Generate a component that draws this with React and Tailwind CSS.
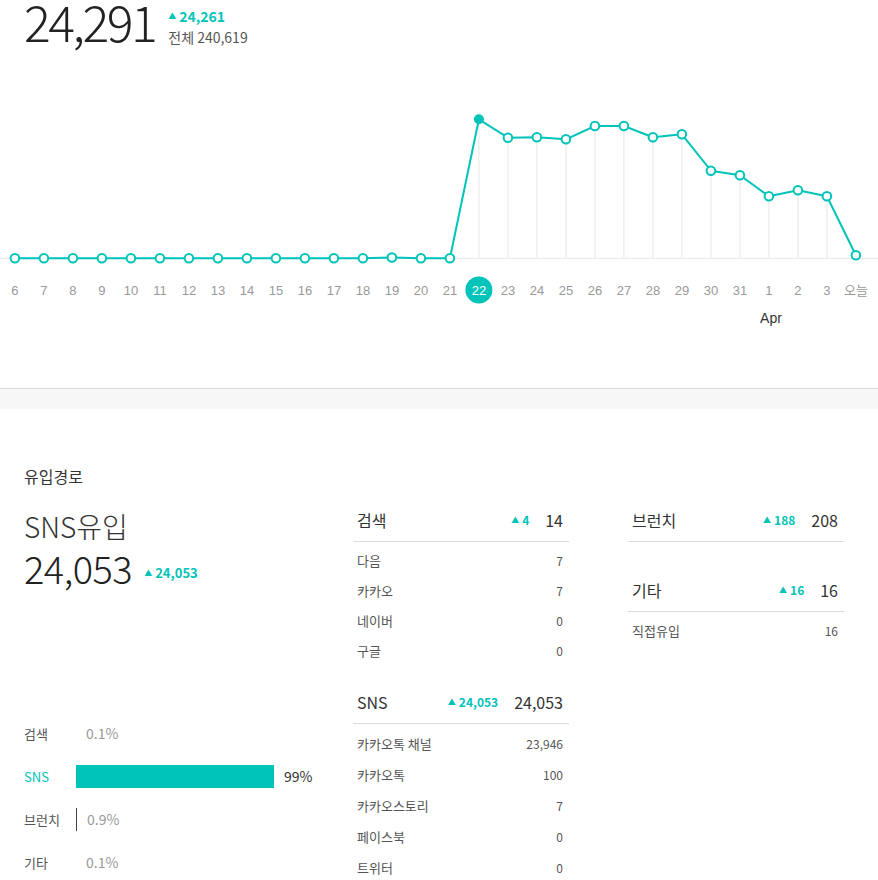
import React from "react";

const TEAL = "#00c3b9";
const CJK = "font-['Noto_Sans_CJK_KR','Noto_Sans',sans-serif]";

// daily visitor series: [label, y (chart px)]
const SERIES = [
  ["6", 258.3], ["7", 258.3], ["8", 258.3], ["9", 258.3], ["10", 258.3],
  ["11", 258.3], ["12", 258.3], ["13", 258.3], ["14", 258.3], ["15", 258.3],
  ["16", 258.3], ["17", 258.3], ["18", 258.3], ["19", 257.5], ["20", 258.3],
  ["21", 258.3], ["22", 119.3], ["23", 137.7], ["24", 137.3], ["25", 139.3],
  ["26", 126], ["27", 126], ["28", 137.3], ["29", 134.3], ["30", 170.7],
  ["31", 175.3], ["1", 196.3], ["2", 190.3], ["3", 196.3], ["오늘", 255.3],
];

const OFFSET = 60;
const BASE = 258.3 - OFFSET;
const xAt = (i) => 14.9 + 29 * i;
const SELECTED = 16;

function Chart() {
  const pts = SERIES.map(([, y], i) => [xAt(i), y - OFFSET]);
  const d = pts.map(([x, y], i) => `${i ? "L" : "M"}${x} ${y}`).join(" ");
  return (
    <svg width="878" height="328" viewBox="0 0 878 328" className="block">
      <line x1="0" y1={BASE} x2="878" y2={BASE} stroke="#e6e6e6" strokeWidth="1" />
      {pts.map(([x, y], i) =>
        y < BASE - 1 ? (
          <line key={"g" + i} x1={x} y1={y} x2={x} y2={BASE} stroke="#efefef" strokeWidth="1.5" />
        ) : null
      )}
      <path d={d} fill="none" stroke={TEAL} strokeWidth="2" strokeLinejoin="round" />
      {pts.map(([x, y], i) =>
        i === SELECTED ? (
          <circle key={"p" + i} cx={x} cy={y} r="5" fill={TEAL} />
        ) : (
          <circle key={"p" + i} cx={x} cy={y} r="4.3" fill="#fff" stroke={TEAL} strokeWidth="2" />
        )
      )}
      <circle cx={xAt(SELECTED)} cy={290 - OFFSET} r="13.5" fill={TEAL} />
      {SERIES.map(([label], i) => (
        <text
          key={"t" + i}
          x={xAt(i)}
          y={290 - OFFSET + 4.5}
          textAnchor="middle"
          fontSize="13"
          fill={i === SELECTED ? "#fff" : "#999"}
          fontFamily="'Liberation Sans','Noto Sans CJK KR',sans-serif"
        >
          {label}
        </text>
      ))}
      <text
        x="771"
        y={318 - OFFSET + 5}
        textAnchor="middle"
        fontSize="14"
        fill="#333"
        fontFamily="'Liberation Sans',sans-serif"
      >
        Apr
      </text>
    </svg>
  );
}

function Up({ value, className = "" }) {
  return (
    <span className={`flex items-center font-bold ${className}`} style={{ color: TEAL }}>
      <span className="mr-[3px] text-[8px] leading-none">▲</span>
      {value}
    </span>
  );
}

function Group({ title, up, total, rows, rowH = "h-[30px]", className = "" }) {
  return (
    <div className={className}>
      <div className="flex h-[43px] items-center border-b border-[#dcdcdc] pl-[4px] pr-[6px]">
        <span className="text-[16px] text-[#333]">{title}</span>
        <span className="ml-auto text-[12px]">
          <Up value={up} />
        </span>
        <span className="ml-[16px] text-[16px] text-[#333]">{total}</span>
      </div>
      {rows && (
        <div className="pt-[4px]">
          {rows.map(([k, v]) => (
            <div key={k} className={`flex ${rowH} items-center pl-[4px] pr-[6px] text-[13px] text-[#555]`}>
              <span>{k}</span>
              <span className="ml-auto text-[12px]">{v}</span>
            </div>
          ))}
        </div>
      )}
    </div>
  );
}

function ShareRow({ label, pct, width, active, mark }) {
  return (
    <div className="flex h-[43px] items-center">
      <span className={`w-[52px] text-[13px] ${active ? "" : "text-[#555]"}`} style={active ? { color: TEAL } : undefined}>
        {label}
      </span>
      {width > 0 && <span className="h-[23px]" style={{ width, background: TEAL }} />}
      {mark && <span className="h-[23px] w-px bg-[#444]" />}
      <span className={`ml-[10px] text-[14px] ${active ? "text-[#333]" : "text-[#999]"}`}>{pct}</span>
    </div>
  );
}

export default function App() {
  return (
    <div className={`w-[878px] bg-white ${CJK}`}>
      <div className="h-[60px] overflow-hidden">
        <div className="flex items-start px-[24px]">
          <span className="mt-[-5px] text-[50px] font-light leading-none tracking-[-2.5px] text-[#222]">24,291</span>
          <div className="ml-[13px] mt-[6px] flex flex-col">
            <span className="h-[20px] text-[14px] leading-[20px]">
              <Up value="24,261" />
            </span>
            <span className="h-[22px] text-[14px] leading-[22px] text-[#555]">전체 240,619</span>
          </div>
        </div>
      </div>

      <Chart />

      <div className="h-[21px] border-t border-[#d9d9d9] bg-[#f7f7f7]" />

      <div className="px-[24px] pt-[57px]">
        <div className="h-[20px] text-[16px] leading-[20px] text-[#333]">유입경로</div>
        <div className="mt-[13px] flex">
          <div className="w-[329px]">
            <div className="mt-[7px] h-[40px] text-[28px] font-light leading-[40px] text-[#333]">SNS유입</div>
            <div className="flex h-[44px] items-center">
              <span className="text-[38px] font-light leading-none tracking-[-0.5px] text-[#222]">24,053</span>
              <span className="ml-[12px] mt-[10px] text-[13px]">
                <Up value="24,053" />
              </span>
            </div>
            <div className="mt-[122px]">
              <ShareRow label="검색" pct="0.1%" width={0} />
              <ShareRow label="SNS" pct="99%" width={198} active />
              <ShareRow label="브런치" pct="0.9%" width={0} mark />
              <ShareRow label="기타" pct="0.1%" width={0} />
            </div>
          </div>

          <div className="w-[216px]">
            <Group
              title="검색"
              up="4"
              total="14"
              rows={[["다음", "7"], ["카카오", "7"], ["네이버", "0"], ["구글", "0"]]}
            />
            <Group
              className="mt-[15px]"
              title="SNS"
              up="24,053"
              total="24,053"
              rowH="h-[31px]"
              rows={[["카카오톡 채널", "23,946"], ["카카오톡", "100"], ["카카오스토리", "7"], ["페이스북", "0"], ["트위터", "0"]]}
            />
          </div>

          <div className="ml-[59px] w-[216px]">
            <Group title="브런치" up="188" total="208" />
            <Group className="mt-[27px]" title="기타" up="16" total="16" rows={[["직접유입", "16"]]} />
          </div>
        </div>
      </div>
    </div>
  );
}
